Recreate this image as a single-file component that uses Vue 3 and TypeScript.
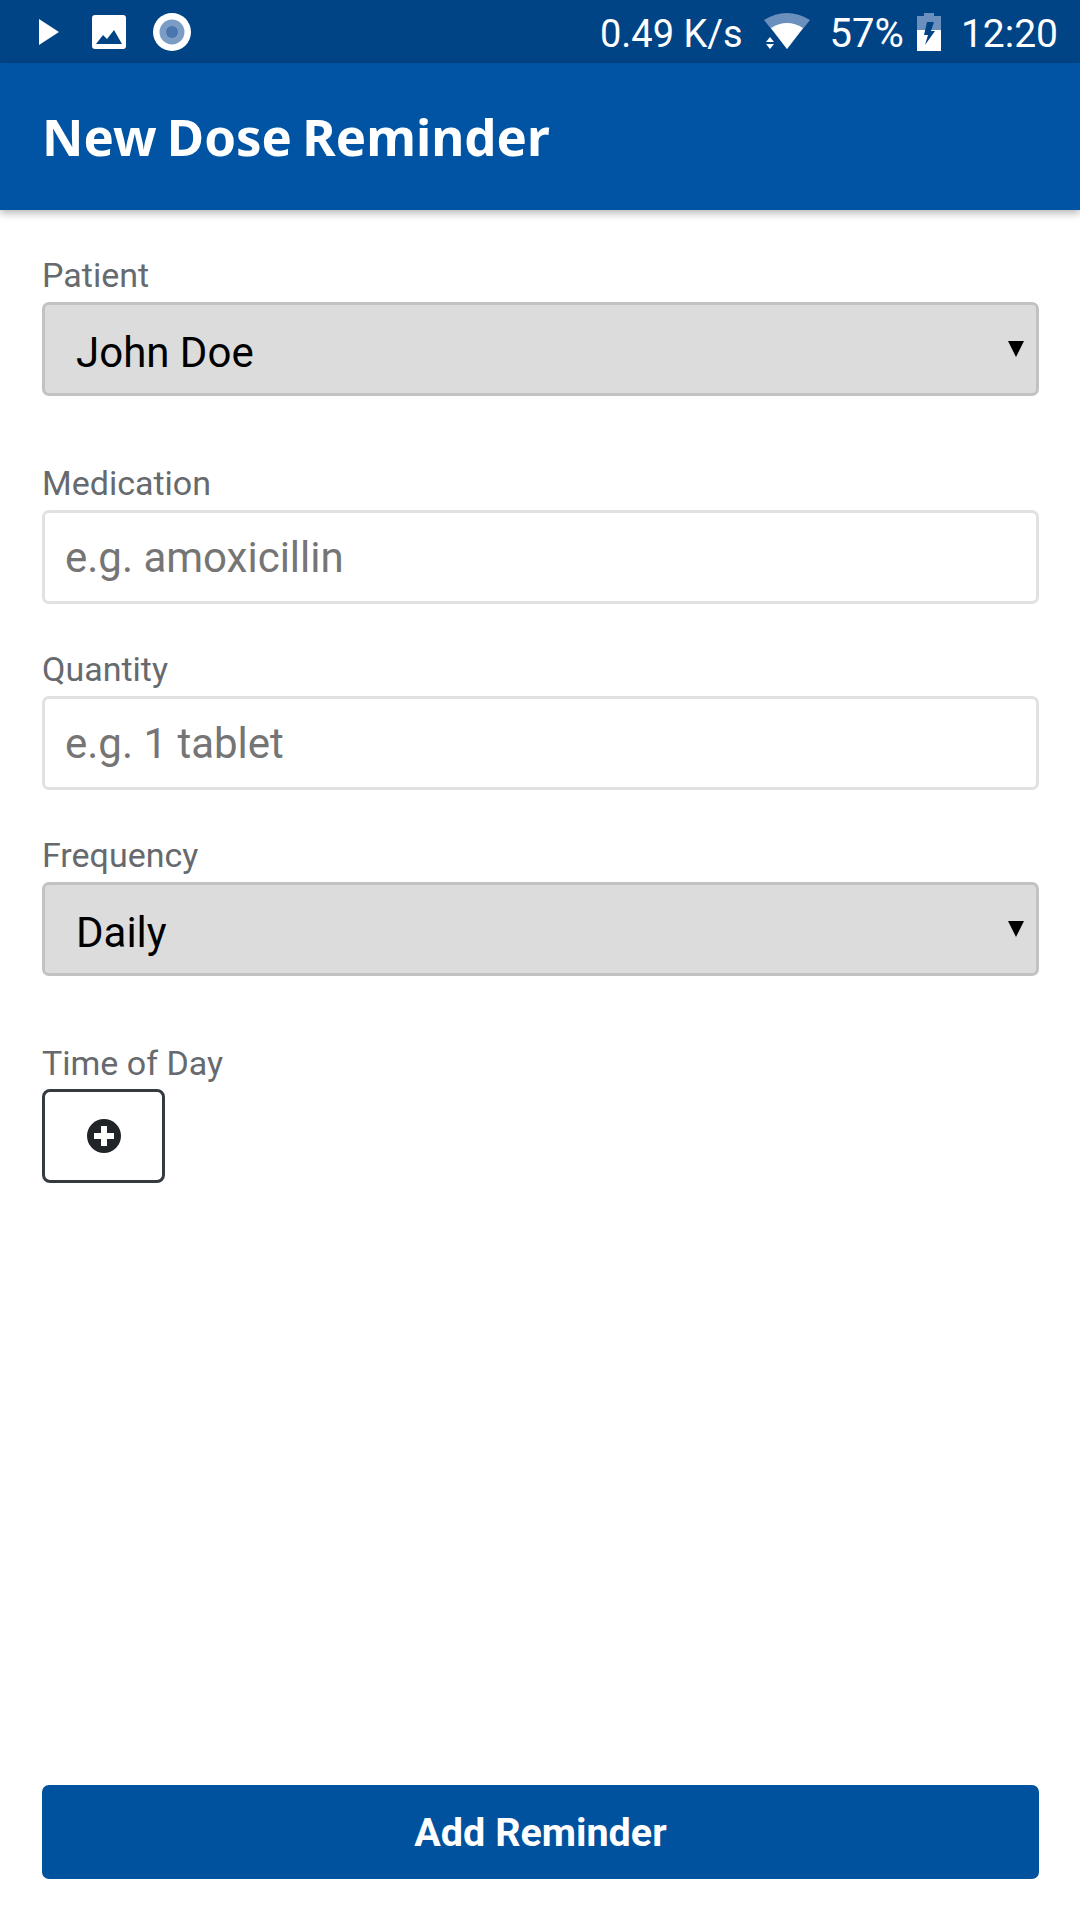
<script setup lang="ts">
import { ref } from 'vue'

const patient = ref('John Doe')
const frequency = ref('Daily')
const medication = ref('')
const quantity = ref('')
</script>

<template>
  <div class="screen">
    <div class="status">
      <div class="status-left">
        <svg class="i-play" viewBox="0 0 20 26" width="20" height="26"><path d="M0 0 L20 13 L0 26 Z" fill="#fff" /></svg>
        <svg class="i-image" viewBox="0 0 34 34" width="34" height="34">
          <rect width="34" height="34" rx="3" fill="#fff" />
          <path d="M4 29 L11 20 L15 24 L22 15 L30 29 Z" fill="#004486" />
        </svg>
        <svg class="i-rec" viewBox="0 0 38 38" width="38" height="38">
          <circle cx="19" cy="19" r="19" fill="#fff" />
          <circle cx="19" cy="19" r="12.5" fill="#7b9cc4" />
          <circle cx="19" cy="19" r="6" fill="#4a76b0" />
        </svg>
      </div>
      <div class="status-right">
        <span class="speed">0.49 K/s</span>
        <svg class="i-wifi" viewBox="0 0 46 37" width="46" height="37">
          <path d="M0 7 Q23 -7 46 7 L23 36 Z" fill="#6c90bd" />
          <path d="M7 15 Q23 5 39 15 L23 36 Z" fill="#fff" />
          <path d="M6 24 L10 29 L2 29 Z M2 31 L10 31 L6 36 Z" fill="#fff" />
        </svg>
        <span class="pct">57%</span>
        <svg class="i-batt" viewBox="0 0 24 38" width="24" height="38">
          <path d="M7 0 H17 V3 H24 V17 H0 V3 H7 Z" fill="#6c90bd" />
          <path d="M0 17 H24 V38 H0 Z" fill="#fff" />
          <path d="M10 9 H17 L14 18 H18 L8 32 L11 22 H7 Z" fill="#004486" />
        </svg>
        <span class="clock">12:20</span>
      </div>
    </div>

    <header class="bar">
      <h1>New Dose Reminder</h1>
    </header>

    <main class="form">
      <div class="fields">
        <label class="field field-select">
          <span class="label">Patient</span>
          <span class="select-wrap">
            <select v-model="patient"><option>John Doe</option></select>
            <i class="arrow"></i>
          </span>
        </label>
        <label class="field field-input">
          <span class="label">Medication</span>
          <input v-model="medication" placeholder="e.g. amoxicillin" />
        </label>
        <label class="field field-input">
          <span class="label">Quantity</span>
          <input v-model="quantity" placeholder="e.g. 1 tablet" />
        </label>
        <label class="field field-select">
          <span class="label">Frequency</span>
          <span class="select-wrap">
            <select v-model="frequency"><option>Daily</option></select>
            <i class="arrow"></i>
          </span>
        </label>
        <div class="field field-time">
          <span class="label">Time of Day</span>
          <button class="add-time" type="button" aria-label="Add time">
            <svg viewBox="0 0 34 34" width="34" height="34">
              <circle cx="17" cy="17" r="17" fill="#212529" />
              <path d="M14 7 H20 V14 H27 V20 H20 V27 H14 V20 H7 V14 H14 Z" fill="#fff" />
            </svg>
          </button>
        </div>
      </div>
      <button class="submit" type="button">Add Reminder</button>
    </main>
  </div>
</template>

<style>
html, body { margin: 0; background: #fff; }
</style>

<style scoped>
.screen {
  width: 1080px;
  height: 1920px;
  display: flex;
  flex-direction: column;
  font-family: Roboto, sans-serif;
  background: #fff;
  overflow: hidden;
}
.status {
  height: 63px;
  flex: none;
  background: #004486;
  display: flex;
  justify-content: space-between;
  align-items: center;
  color: #fff;
  font-size: 38px;
  padding: 0 22px 0 39px;
  box-sizing: border-box;
}
.status-left, .status-right { display: flex; align-items: center; }
.status-right span { padding-top: 4px; }
.i-image { margin-left: 33px; }
.i-rec { margin-left: 27px; }
.i-wifi { margin-left: 21px; }
.status-right .pct { margin-left: 20px; font-size: 40px; }
.i-batt { margin-left: 13px; }
.status-right .clock { margin-left: 20px; font-size: 39px; }
.bar {
  height: 147px;
  flex: none;
  background: #0054a3;
  box-shadow: 0 3px 8px rgba(0, 0, 0, 0.3);
  display: flex;
  align-items: center;
  padding-left: 42px;
  position: relative;
}
h1 {
  margin: 0;
  color: #fff;
  font-family: "Noto Sans", sans-serif;
  font-weight: 700;
  font-size: 51px;
  line-height: 1;
  word-spacing: -3px;
}
.form {
  flex: 1;
  display: flex;
  flex-direction: column;
  justify-content: space-between;
  padding: 0 41px 41px 42px;
}
.fields { padding-top: 47px; }
.field { display: block; margin-bottom: 47px; }
.field-select { margin-bottom: 69px; }
.label {
  display: block;
  color: #666a6e;
  font-size: 34px;
  line-height: 36px;
  margin-bottom: 9px;
}
.field-time .label { margin-bottom: 8px; }
.select-wrap { display: block; position: relative; }
select, input {
  display: block;
  width: 100%;
  height: 94px;
  box-sizing: border-box;
  border-radius: 7px;
  font-family: Roboto, sans-serif;
  font-size: 42px;
  outline: none;
  margin: 0;
}
select {
  appearance: none;
  background: #dcdcdc;
  border: 3px solid #c2c2c2;
  color: #000;
  padding: 6px 0 0 31px;
}
input {
  background: #fff;
  border: 3px solid #e1e1e1;
  padding: 0 20px;
}
input::placeholder { color: #757575; opacity: 1; }
.arrow {
  position: absolute;
  right: 15px;
  top: 39px;
  width: 0;
  height: 0;
  border-left: 8px solid transparent;
  border-right: 8px solid transparent;
  border-top: 16px solid #000;
}
.add-time {
  display: flex;
  align-items: center;
  justify-content: center;
  width: 123px;
  height: 94px;
  background: #fff;
  border: 3px solid #343a40;
  border-radius: 8px;
  padding: 0;
}
.add-time svg { display: block; }
.submit {
  height: 94px;
  border: none;
  border-radius: 7px;
  background: #00529f;
  color: #fff;
  font-family: Roboto, sans-serif;
  font-weight: 700;
  font-size: 39.5px;
  flex: none;
}
</style>
